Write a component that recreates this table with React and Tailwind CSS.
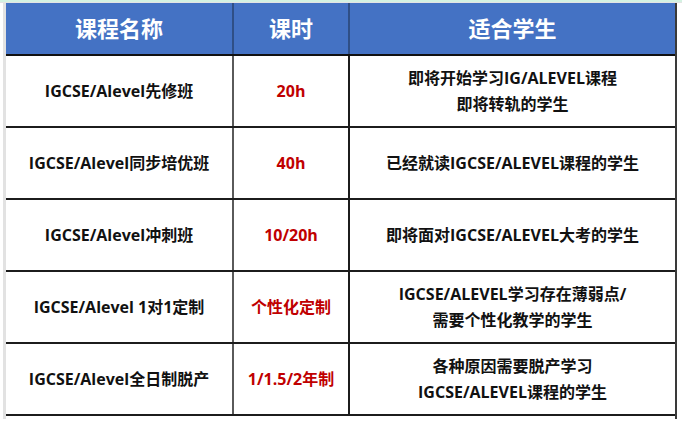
import React from "react";

const rows = [
  { name: "IGCSE/Alevel先修班", hours: "20h", who: ["即将开始学习IG/ALEVEL课程", "即将转轨的学生"] },
  { name: "IGCSE/Alevel同步培优班", hours: "40h", who: ["已经就读IGCSE/ALEVEL课程的学生"] },
  { name: "IGCSE/Alevel冲刺班", hours: "10/20h", who: ["即将面对IGCSE/ALEVEL大考的学生"] },
  { name: "IGCSE/Alevel 1对1定制", hours: "个性化定制", who: ["IGCSE/ALEVEL学习存在薄弱点/", "需要个性化教学的学生"] },
  { name: "IGCSE/Alevel全日制脱产", hours: "1/1.5/2年制", who: ["各种原因需要脱产学习", "IGCSE/ALEVEL课程的学生"] },
];

export default function App() {
  return (
    <div
      className="w-[682px] h-[427px] bg-white overflow-hidden flex flex-col"
      style={{ fontFamily: '"Open Sans", "Noto Sans CJK SC", sans-serif' }}
    >
      <div className="h-[2px] bg-[#d4f2e2]" />
      <div className="h-[1px] bg-[#e4e4e4]" />
      <div className="flex">
        <div className="w-[3px]" />
        <div className="w-[3px] h-[416px] bg-[#e2e2e2]" />
        <div className="w-[671px] flex flex-col border-r-2 border-[#3a3a3a]">
          <div className="flex h-[53px] bg-[#4472c4] text-white font-bold text-[22px] border-b-2 border-[#111]">
            <div className="w-[228px] flex items-center justify-center border-r-2 border-[#2f4f86]">课程名称</div>
            <div className="w-[116px] flex items-center justify-center border-r-2 border-[#2f4f86]">课时</div>
            <div className="flex-1 flex items-center justify-center">适合学生</div>
          </div>
          {rows.map((r, i) => (
            <div key={i} className="flex h-[72px] border-b-2 border-[#1c1c1c] text-[16px] font-bold text-[#111]">
              <div className="w-[228px] flex items-center justify-center border-r-2 border-[#5a5a5a]">{r.name}</div>
              <div className="w-[116px] flex items-center justify-center border-r-2 border-[#1c1c1c] text-[#c00000]">{r.hours}</div>
              <div className="flex-1 flex flex-col items-center justify-center leading-[26px]">
                {r.who.map((w, j) => (
                  <div key={j}>{w}</div>
                ))}
              </div>
            </div>
          ))}
        </div>
      </div>
    </div>
  );
}
